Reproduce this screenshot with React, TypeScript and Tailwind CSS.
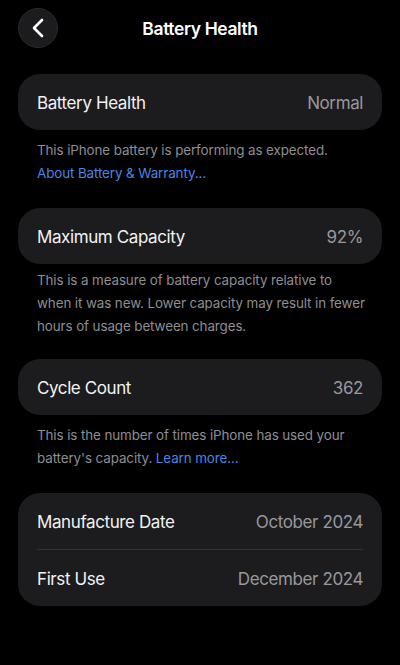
import React from 'react';

const font = { fontFamily: 'Inter, "Noto Sans", sans-serif' };

function Row({ label, value }: { label: string; value: string }) {
  return (
    <div className="flex h-[56px] items-center justify-between px-[19px] pt-[3px] text-[17px] tracking-[-0.4px]">
      <span className="text-[#f2f2f4]">{label}</span>
      <span className="text-[#98989d]">{value}</span>
    </div>
  );
}

function Card({ children }: { children: React.ReactNode }) {
  return <div className="rounded-[22px] bg-[#1c1c1e]">{children}</div>;
}

function Footer({ children, className = '' }: { children: React.ReactNode; className?: string }) {
  return (
    <p className={`whitespace-nowrap pl-[19px] pr-2 text-[13.4px] leading-[23px] tracking-[-0.1px] text-[#8e8e93] ${className}`}>
      {children}
    </p>
  );
}

export default function App() {
  return (
    <div className="min-h-[665px] w-full bg-black pt-2" style={font}>
      <div className="relative flex h-10 items-center justify-center px-[18px]">
        <button className="absolute left-[18px] top-0 flex h-10 w-10 items-center justify-center rounded-full border border-[#2a2a2c] bg-[#1c1c1e]">
          <svg width="14" height="20" viewBox="0 0 14 20" fill="none">
            <path d="M11 2 L3 10 L11 18" stroke="#ffffff" strokeWidth="2.6" strokeLinecap="round" strokeLinejoin="round" />
          </svg>
        </button>
        <h1 className="pt-[2px] text-[17.5px] font-semibold tracking-[-0.4px] text-white">Battery Health</h1>
      </div>

      <div className="flex flex-col px-[18px] pt-[26px]">
        <section className="mb-[23px]">
          <Card>
            <Row label="Battery Health" value="Normal" />
          </Card>
          <Footer className="pt-[9px]">
            This iPhone battery is performing as expected.
            <br />
            <span className="text-[#4b86e6]">About Battery &amp; Warranty...</span>
          </Footer>
        </section>

        <section className="mb-[21px]">
          <Card>
            <Row label="Maximum Capacity" value="92%" />
          </Card>
          <Footer className="pt-[5px]">
            This is a measure of battery capacity relative to
            <br />
            when it was new. Lower capacity may result in fewer
            <br />
            hours of usage between charges.
          </Footer>
        </section>

        <section className="mb-[23px]">
          <Card>
            <Row label="Cycle Count" value="362" />
          </Card>
          <Footer className="pt-[9px]">
            This is the number of times iPhone has used your
            <br />
            battery's capacity. <span className="text-[#4b86e6]">Learn more...</span>
          </Footer>
        </section>

        <section>
          <Card>
            <Row label="Manufacture Date" value="October 2024" />
            <div className="mx-[19px] h-px bg-[#333335]" />
            <Row label="First Use" value="December 2024" />
          </Card>
        </section>
      </div>
    </div>
  );
}
